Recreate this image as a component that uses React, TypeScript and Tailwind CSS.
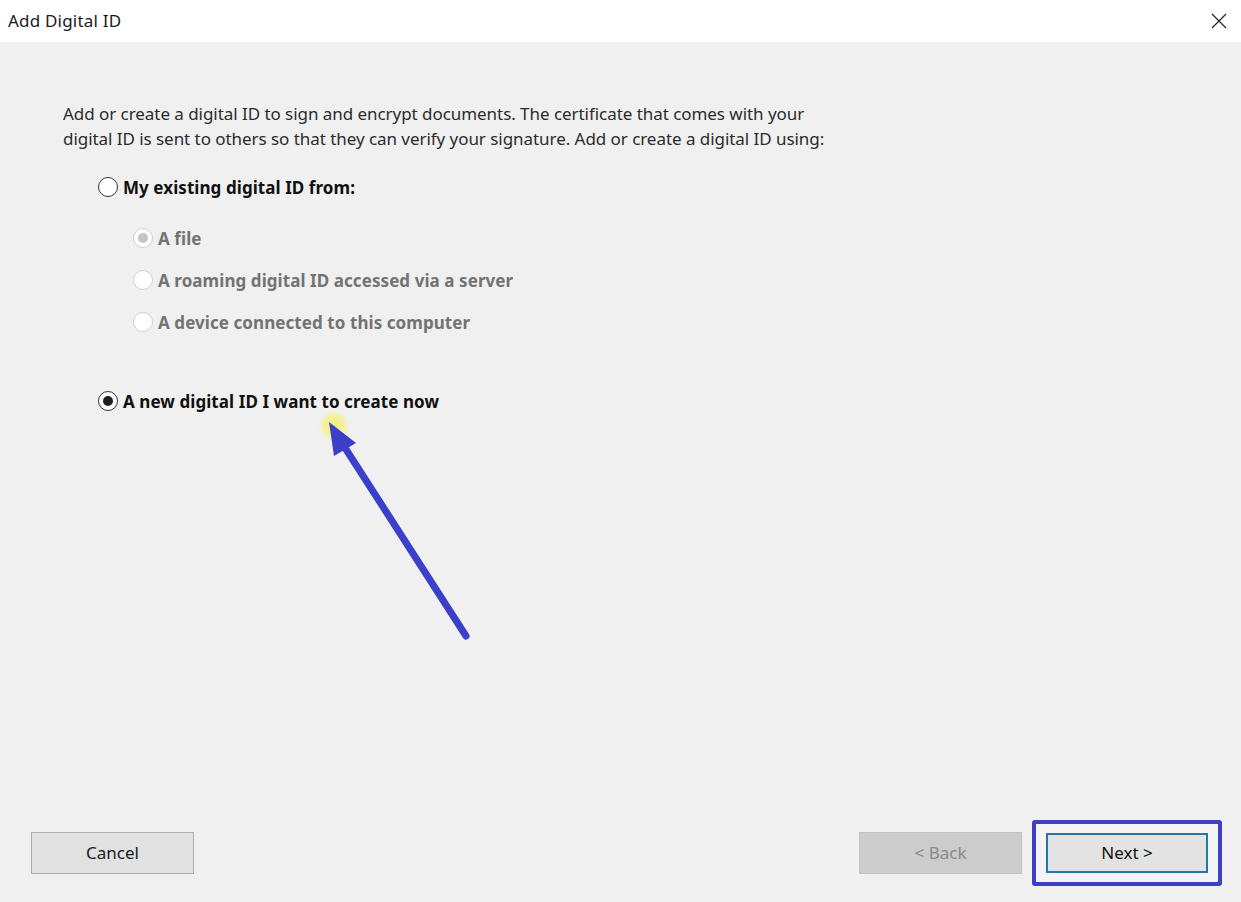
import React from 'react'

const font = { fontFamily: '"Noto Sans", "Open Sans", sans-serif' }

const Radio = ({ checked = false, disabled = false }: { checked?: boolean; disabled?: boolean }) => (
  <span
    className={
      'flex h-[20px] w-[20px] shrink-0 items-center justify-center rounded-full border-[1.5px] bg-white ' +
      (disabled ? 'border-[#cfcfcf]' : 'border-[#333333]')
    }
  >
    {checked && (
      <span className={'h-[10px] w-[10px] rounded-full ' + (disabled ? 'bg-[#c4c4c4]' : 'bg-[#1e1e1e]')} />
    )}
  </span>
)

const Option = ({
  label,
  checked,
  disabled,
  className = '',
}: {
  label: string
  checked?: boolean
  disabled?: boolean
  className?: string
}) => (
  <div className={'flex h-[24px] items-center gap-[5px] ' + className}>
    <Radio checked={checked} disabled={disabled} />
    <span
      className={
        'text-[17px] font-bold leading-none tracking-[0.07px] ' + (disabled ? 'text-[#737373]' : 'text-[#111111]')
      }
    >
      {label}
    </span>
  </div>
)

const Arrow = () => (
  <svg className="pointer-events-none absolute inset-0" width="1241" height="902">
    <defs>
      <radialGradient id="glow">
        <stop offset="0%" stopColor="#f3f36a" stopOpacity="0.95" />
        <stop offset="60%" stopColor="#f3f36a" stopOpacity="0.6" />
        <stop offset="100%" stopColor="#f3f36a" stopOpacity="0" />
      </radialGradient>
    </defs>
    <circle cx="334" cy="426" r="16" fill="url(#glow)" />
    <line x1="466" y1="636" x2="340" y2="440" stroke="#3b3fca" strokeWidth="7" strokeLinecap="round" />
    <polygon points="329,422 334,456 356,443" fill="#3b3fca" />
  </svg>
)

const App = () => {
  return (
    <div className="relative flex h-[902px] w-[1241px] flex-col bg-[#f0f0f0]" style={font}>
      <div className="flex h-[42px] items-center justify-between bg-white pl-[8px] pr-[14px]">
        <span className="text-[17px] tracking-[0.2px] text-[#1a1a1a]">Add Digital ID</span>
        <svg width="16" height="16" viewBox="0 0 16 16">
          <path d="M1 1 L15 15 M15 1 L1 15" stroke="#222" strokeWidth="1.2" />
        </svg>
      </div>

      <div className="flex-1 pl-[63px] pt-[59px]">
        <p className="text-[17px] leading-[25px] tracking-[-0.05px] text-[#2b2b2b]">
          Add or create a digital ID to sign and encrypt documents. The certificate that comes with your
          <br />
          digital ID is sent to others so that they can verify your signature. Add or create a digital ID using:
        </p>
        <Option className="ml-[35px] mt-[24px]" label="My existing digital ID from:" />
        <div className="ml-[70px] mt-[27px] flex flex-col gap-[18px]">
          <Option label="A file" checked disabled />
          <Option label="A roaming digital ID accessed via a server" disabled />
          <Option label="A device connected to this computer" disabled />
        </div>
        <Option className="ml-[35px] mt-[55px]" label="A new digital ID I want to create now" checked />
      </div>

      <div className="flex h-[66px] items-center justify-between pl-[31px] pr-[19px] mb-[16px]">
        <button className="h-[42px] w-[163px] border border-[#adadad] bg-[#e1e1e1] text-[17px] text-[#1a1a1a]">
          Cancel
        </button>
        <div className="flex items-center gap-[10px]">
          <button className="h-[42px] w-[163px] border border-[#c4c4c4] bg-[#cccccc] text-[17px] text-[#8a8a8a]">
            &lt; Back
          </button>
          <div className="flex h-[66px] w-[190px] items-center justify-center rounded-[3px] border-4 border-[#3e40c4] bg-[#f4f4f4]">
            <button className="h-[40px] w-[162px] border-2 border-[#2676ad] bg-[#e3e3e3] text-[17px] text-[#111111]">
              Next &gt;
            </button>
          </div>
        </div>
      </div>

      <Arrow />
    </div>
  )
}

export default App
